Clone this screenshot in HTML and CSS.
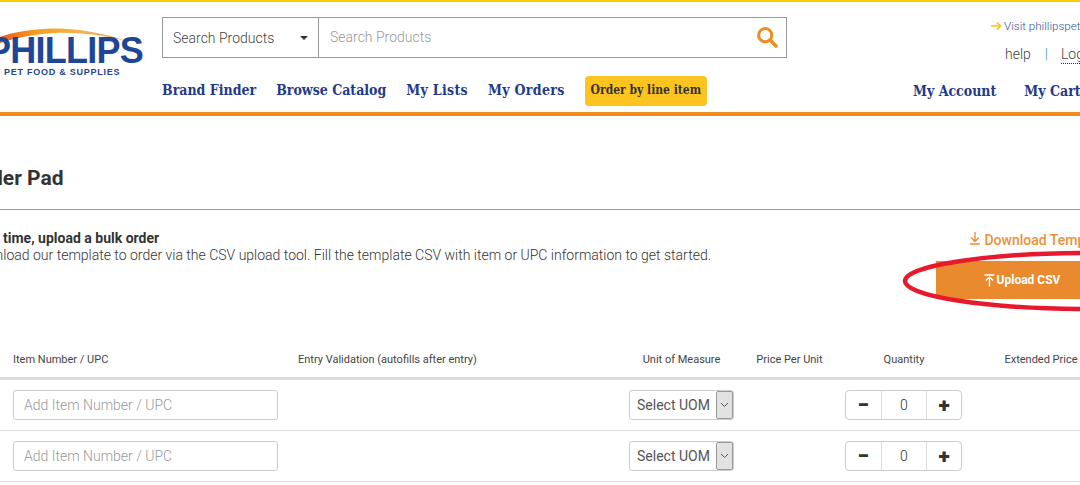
FILE: index.html
```html
<!DOCTYPE html>
<html lang="en">
<head>
<meta charset="utf-8">
<title>Order Pad</title>
<link rel="stylesheet" href="styles.css">
</head>
<body>
<div class="page">
  <header class="site-header">
    <a class="logo">
      <svg class="logo-arc" width="140" height="24" viewBox="0 0 140 24" aria-hidden="true">
        <defs>
          <linearGradient id="arc" x1="0" x2="1" y1="0" y2="0">
            <stop offset="0" stop-color="#ee5a24"/>
            <stop offset="0.3" stop-color="#f5a11c"/>
            <stop offset="0.6" stop-color="#f6b04a"/>
            <stop offset="1" stop-color="#e8a878"/>
          </linearGradient>
        </defs>
        <path d="M0 10 C18 3 50 -1 80 3 C100 6 116 10 130 15 C108 9 82 5 55 6 C35 7 15 11 0 16 Z" fill="url(#arc)"/>
      </svg>
      <span class="logo-name">PHILLIPS</span>
      <span class="logo-sub">PET FOOD &amp; SUPPLIES</span>
    </a>
    <div class="header-main">
      <form class="search">
        <div class="search-type">
          <span>Search Products</span>
          <i class="caret"></i>
        </div>
        <div class="search-input">
          <span>Search Products</span>
          <svg width="22" height="22" viewBox="0 0 22 22" aria-hidden="true">
            <circle cx="9.2" cy="9.2" r="6.6" fill="none" stroke="#ee8d24" stroke-width="3"/>
            <path d="M14 14 L20 20" stroke="#ee8d24" stroke-width="3.6" stroke-linecap="round"/>
          </svg>
        </div>
      </form>
      <nav class="main-nav">
        <a>Brand Finder</a>
        <a>Browse Catalog</a>
        <a class="nav-wide">My Lists</a>
        <a class="nav-wide">My Orders</a>
        <a class="nav-pill">Order by line item</a>
      </nav>
    </div>
    <div class="header-side">
      <div class="visit"><svg class="visit-arrow" width="11" height="10" viewBox="0 0 11 10" aria-hidden="true"><path d="M0 5H9.5M5.8 1.2L9.6 5L5.8 8.8" fill="none" stroke="#fcc419" stroke-width="1.6"/></svg>Visit phillipspet.com</div>
      <div class="util"><a>help</a><span class="util-sep">|</span><a class="login">Log in</a></div>
      <nav class="account-nav"><a>My Account</a><a>My Cart</a></nav>
    </div>
  </header>

  <main class="content">
    <h1 class="title">Order Pad</h1>
    <section class="bulk">
      <div class="bulk-text">
        <strong>Save time, upload a bulk order</strong>
        <p>Download our template to order via the CSV upload tool. Fill the template CSV with item or UPC information to get started.</p>
      </div>
      <div class="bulk-actions">
        <a class="download">
          <svg width="12" height="14" viewBox="0 0 12 14" aria-hidden="true"><path d="M6 1V10M2 6.5L6 10.5L10 6.5M1 13H11" fill="none" stroke="#ee8f3a" stroke-width="1.4"/></svg>
          Download Template
        </a>
        <a class="upload">
          <svg width="11" height="13" viewBox="0 0 11 13" aria-hidden="true"><path d="M0.5 1H10.5M5.5 12.5V3M1.8 6.5L5.5 3L9.2 6.5" fill="none" stroke="#fff" stroke-width="1.4"/></svg>
          Upload CSV
        </a>
      </div>
    </section>

    <div class="grid grid-head">
      <span>Item Number / UPC</span>
      <span>Entry Validation (autofills after entry)</span>
      <span class="center">Unit of Measure</span>
      <span class="center">Price Per Unit</span>
      <span class="center">Quantity</span>
      <span class="center">Extended Price</span>
    </div>
    <div class="grid grid-row">
      <div class="item-input">Add Item Number / UPC</div>
      <span></span>
      <div class="uom"><span>Select UOM</span><i class="uom-btn"><svg width="9" height="6" viewBox="0 0 9 6" aria-hidden="true"><path d="M1 1L4.5 4.5L8 1" fill="none" stroke="#555" stroke-width="1"/></svg></i></div>
      <span></span>
      <div class="qty"><b>−</b><span>0</span><b>+</b></div>
      <span></span>
    </div>
    <div class="grid grid-row">
      <div class="item-input">Add Item Number / UPC</div>
      <span></span>
      <div class="uom"><span>Select UOM</span><i class="uom-btn"><svg width="9" height="6" viewBox="0 0 9 6" aria-hidden="true"><path d="M1 1L4.5 4.5L8 1" fill="none" stroke="#555" stroke-width="1"/></svg></i></div>
      <span></span>
      <div class="qty"><b>−</b><span>0</span><b>+</b></div>
      <span></span>
    </div>
  </main>

  <svg class="annotation" width="280" height="70" viewBox="0 0 280 70" aria-hidden="true">
    <ellipse cx="190" cy="35" rx="185" ry="28" fill="none" stroke="#e8192c" stroke-width="4.5"/>
  </svg>
</div>
</body>
</html>
```
FILE: styles.css
```css
* { box-sizing: border-box; }
html, body { margin: 0; padding: 0; background: #fff; overflow: hidden; }
body { width: 1080px; height: 485px; font-family: Roboto, "Liberation Sans", sans-serif; color: #333; }
.page { position: relative; width: 1080px; height: 485px; overflow: hidden; }

.site-header {
  display: flex;
  width: 1200px;
  height: 116px;
  border-top: 2px solid #ffcb05;
  border-bottom: 4px solid #ef8c22;
}
.logo { position: relative; flex: 0 0 162px; display: block; }
.logo-arc { position: absolute; left: 0; top: 25px; }
.logo-name {
  position: absolute; left: -13px; top: 29px;
  font: 700 36px/40px "Liberation Sans", Arial, sans-serif;
  letter-spacing: -0.75px; color: #1f4597; white-space: nowrap;
}
.logo-sub {
  position: absolute; left: 4px; top: 65px;
  font: 700 9px/10px "Liberation Sans", Arial, sans-serif;
  letter-spacing: 0.75px; color: #1f4597; white-space: nowrap;
}

.header-main { flex: 0 0 625px; padding-top: 15px; }
.search { display: flex; height: 41px; border: 1px solid #999; }
.search-type {
  flex: 0 0 156px; display: flex; align-items: center; justify-content: space-between;
  padding: 0 10px 0 10px; border-right: 1px solid #999;
  font-size: 14px; color: #444; font-weight: 300;
}
.caret { width: 0; height: 0; border: 4px solid transparent; border-top: 4.5px solid #333; border-bottom: 0; }
.search-input {
  flex: 1; display: flex; align-items: center; justify-content: space-between;
  padding: 0 8px 2px 11px; font-size: 14px; color: #999; font-weight: 300;
}
.main-nav { display: flex; align-items: center; gap: 20px; margin-top: 17px; height: 30px; }
.main-nav a, .account-nav a {
  font-family: "DejaVu Serif", serif; font-stretch: condensed; font-weight: 700; font-size: 14px; color: #1f3a8a; white-space: nowrap;
}
.main-nav a.nav-wide { letter-spacing: 0.3px; }
.main-nav a.nav-pill {
  background: #fdc41f; color: #333; font-size: 12px;
  padding: 0 6px; height: 30px; line-height: 29px; border-radius: 4px; margin-top: 2px;
}

.header-side { flex: 1; font-weight: 300; position: relative; }
.visit { display: flex; align-items: center; gap: 2px; margin: 17px 0 0 204px; font-size: 11.6px; line-height: 14px; color: #3c4f96; white-space: nowrap; }
.visit-arrow { flex: none; }
.util { display: flex; margin: 12px 0 0 218px; font-size: 14px; line-height: 18px; color: #444; white-space: nowrap; }
.util-sep { margin: 0 13px 0 14px; color: #4a90e2; }
.login { border-bottom: 1px dotted #333; height: 19px; }
.account-nav { display: flex; gap: 28px; margin: 19px 0 0 126px; }

.content { width: 1200px; }
.title { margin: 50px 0 0 -31px; font-size: 21px; line-height: 24px; font-weight: 700; color: #333; }
.bulk {
  display: flex; justify-content: space-between;
  margin: 19px 0 0 -32px; padding-top: 20px; border-top: 1px solid #999; height: 144px;
}
.bulk-text strong { display: block; font-size: 14px; line-height: 17px; font-weight: 700; padding-left: 1px; }
.bulk-text p { margin: 0; font-size: 14px; line-height: 17px; font-weight: 300; white-space: nowrap; }
.bulk-actions { flex: 0 0 264px; display: flex; flex-direction: column; }
.download { margin: 1px 0 0 33px; font-size: 14px; line-height: 17px; font-weight: 500; color: #ee8f3a; white-space: nowrap; }
.upload {
  display: flex; align-items: center; justify-content: center; gap: 2px;
  margin-top: 12px; width: 172px; height: 38px; background: #e98a2e; color: #fff; font-size: 12px; font-weight: 700;
}

.grid { display: grid; grid-template-columns: 285px 331px 105px 111px 118px 156px; padding-left: 13px; width: 1200px; }
.center { text-align: center; }
.grid-head {
  height: 27px; align-items: start; font-size: 11px; line-height: 13px; color: #444;
  border-bottom: 3px solid #ddd;
}
.grid-head span { white-space: nowrap; }
.grid-row { align-items: center; height: 51px; border-bottom: 1px solid #ddd; font-size: 14px; }
.item-input {
  width: 265px; height: 30px; border: 1px solid #ccc; border-radius: 3px; padding: 0 10px;
  line-height: 28px; color: #999; font-weight: 300;
}
.uom {
  display: flex; align-items: center; justify-content: space-between; width: 105px; height: 30px;
  border: 1px solid #ccc; border-radius: 3px; padding-left: 7px; color: #555;
}
.uom-btn {
  display: flex; align-items: center; justify-content: center; width: 17px; height: 28px;
  background: #e2e2e2; border: 1px solid #999; border-radius: 2px;
}
.qty {
  display: grid; grid-template-columns: 35px 46px 34px; width: 117px; height: 30px;
  border: 1px solid #ccc; border-radius: 4px; text-align: center; line-height: 28px;
}
.qty b { font-size: 21px; color: #333; font-weight: 900; }
.qty span { border-left: 1px solid #ddd; border-right: 1px solid #ddd; font-weight: 300; }

.annotation { position: absolute; left: 900px; top: 246px; }
```
